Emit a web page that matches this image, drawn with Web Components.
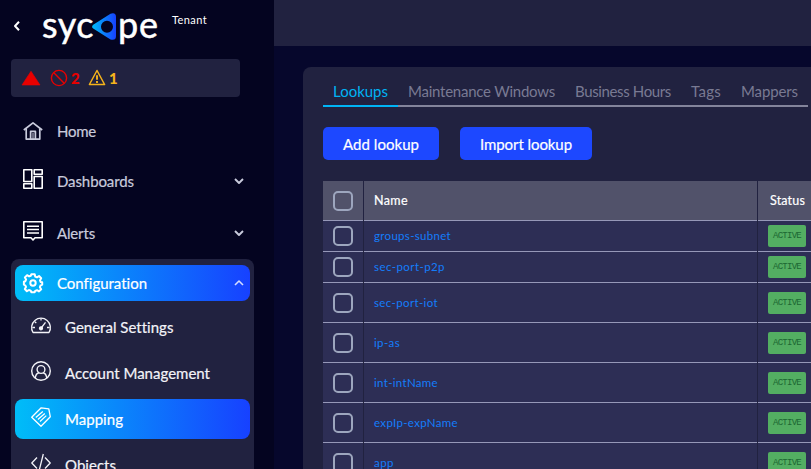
<!DOCTYPE html>
<html lang="en">
<head>
<meta charset="utf-8">
<title>Sycope</title>
<style>
html,body{margin:0;height:100%;overflow:hidden;background:#040420;font-family:Lato,"Liberation Sans",sans-serif}
</style>
</head>
<body>
<app-shell></app-shell>
<script>
function define(name, html, ready) {
  const t = document.createElement('template');
  t.innerHTML = html;
  customElements.define(name, class extends HTMLElement {
    constructor() {
      super();
      this.attachShadow({ mode: 'open' });
    }
    connectedCallback() {
      if (this.shadowRoot.childNodes.length) return;
      this.shadowRoot.append(document.importNode(t.content, true));
      if (ready) ready(this, this.shadowRoot);
    }
  });
}

/* Text tracked to a given width. */
define('fit-text', `<style>:host{display:inline-block;white-space:nowrap;flex:none}span{display:inline-block}</style><span><slot></slot></span>`,
  (el, root) => {
    const s = root.querySelector('span'), w = parseFloat(el.getAttribute('w'));
    const natural = s.getBoundingClientRect().width;
    s.style.letterSpacing = ((w - natural) / el.textContent.length) + 'px';
    el.style.width = w + 'px';
  });

const ICONS = {
  home: '<g stroke-width="1.7"><path d="M.8 9 10 1.8 19.200 9"/><path d="M3.200 7.600V18.100H16.800V7.600"/><path d="M7.600 18V10.400H12.400V18"/><path d="M10 12v6" stroke-width="1"/></g>',
  dash: '<g stroke-width="1.600"><path d="M.8.8H8.800V12.500H.8ZM11.200.8H19.200V5.200H11.200ZM11.200 7.500H19.200V19.200H11.200ZM.8 14.800H8.800V19.200H.8Z"/></g>',
  alerts: '<g stroke-width="1.600"><path d="M.8.8H19.200V16.800H12L10 19 8 16.800H.8Z"/><path d="M4 5.200H16M4 8.600H16M4 12H16" stroke-width="1.500"/></g>',
  gear: '<g stroke-width="2"><path d="M8.3 1.2h3.400l.5 2.300 1.800.8 2-1.300 2.200 2.300-1.200 2 .7 1.700 1.500.3v2.400l-1.700.8-.6 1.700 1.300 2-2.200 2.200-2-1.200-1.800.7-.5 1.300H8.300l-.6-1.600-1.800-.6-2 1.200-2.100-2.200L3 14l-.7-1.700-1.400-.6V8.800l1.500-.6.7-1.800-1.200-2 2.200-2.200 2 1.200 1.700-.6Z"/><circle cx="10" cy="10" r="2.700"/></g>',
  gauge: '<g stroke-width="1.300"><path d="M2 17.500A9.400 9.400 0 1 1 18 17.500Z"/><path d="M10 3.500v2M3.800 6.700l1.500 1.200M1.400 12.500h2.600M16 12.500h2.600M10.200 13 14.500 7.300"/><circle cx="10" cy="13.300" r="1.500" fill="currentColor"/></g>',
  user: '<g stroke-width="1.400"><circle cx="10" cy="10" r="9.300"/><circle cx="10" cy="8.500" r="3.900"/><path d="M4.200 17.200C4.600 13.800 6.300 12 8 11.700M15.800 17.200C15.400 13.800 13.700 12 12 11.700"/></g>',
  tag: '<g stroke-width="1.300"><path d="M.7 10.200 10.200.8 17.800 1.900 19.300 9.800 10 19.300Z"/><path d="M4.800 10.600 11.800 4.600M6.900 12.500 13.800 6.400M9 14.500 15.300 8.600"/></g>',
  code: '<g stroke-width="1.300"><path d="M6 4.500.8 10 6 15.500M14 4.500 19.200 10 14 15.500M12.300 1 7.800 19"/></g>',
  down: '<path d="M6 8 10 12 14 8" stroke-width="1.900"/>',
  up: '<path d="M6 12 10 8 14 12" stroke-width="1.600" stroke="#d5dcff"/>',
  back: '<path d="M12 5.700 8 10 12 14.300" stroke-width="2"/>',
  solid: '<path d="M10 3.200 19 17H1Z" fill="currentColor" stroke="currentColor" stroke-width=".6"/>',
  ban: '<g stroke-width="1.400"><circle cx="10" cy="10" r="7.600"/><path d="M4.600 4.600 15.400 15.400"/></g>',
  warn: '<path d="M10 2.500 17.600 16.500H2.400Z" stroke-width="1.500"/><path d="M10 7.200v4.600M10 13v2" stroke-width="1.900"/>'
};
define('ui-icon', `<style>:host{display:block;width:20px;height:20px;flex:none}svg{display:block;overflow:visible}</style>
<svg width="20" height="20" viewBox="0 0 20 20" fill="none" stroke="currentColor" stroke-linejoin="round"></svg>`,
  (el, root) => root.querySelector('svg').innerHTML = ICONS[el.getAttribute('name')]);

define('brand-logo', `<style>
:host{display:flex;align-items:flex-start;height:48px;color:#fff;font-size:36px;line-height:48px;-webkit-text-stroke:.5px #fff}
svg{display:block;margin:13px 1px 0 -2px;flex:none}
</style>
<fit-text w="52">syc</fit-text>
<svg width="25" height="28" viewBox="0 0 25 28"><defs><linearGradient id="g"><stop offset="0" stop-color="#00bdf8"/><stop offset="1" stop-color="#1741ff"/></linearGradient></defs>
<path fill="url(#g)" fill-rule="evenodd" d="M1.200 11.800 18.500.7Q24 -1 24 4V23Q24 28 18.500 26.500L1.200 15.600Q-1 13.700 1.200 11.800ZM15 7.800a6 6 0 1 0 0 12a6 6 0 1 0 0-12Z"/></svg>
<fit-text w="41">pe</fit-text>`);

define('alert-summary', `<style>
:host{display:flex;align-items:center;box-sizing:border-box;width:229px;height:38px;margin-left:11px;padding-left:10px;background:#212240;border-radius:4px;font:700 15px Lato,sans-serif;color:#e80000}
ui-icon+ui-icon{margin-left:8px}b{margin-left:2px;width:8px}.y{color:#f5b31b}.w{margin-left:8px}
</style><ui-icon name="solid"></ui-icon><ui-icon name="ban"></ui-icon><b>2</b><ui-icon name="warn" class="y w"></ui-icon><b class="y">1</b>`);

define('nav-item', `<style>
:host{display:flex;align-items:center;box-sizing:border-box;height:50px;padding:0 5px 0 23px;color:#c9cbdc;font-size:15px;line-height:20px;-webkit-text-stroke:.2px currentColor}
:host([bright]) ui-icon:first-of-type{color:#fff}
:host([lift]) ui-icon:first-of-type{margin-bottom:4px}
fit-text{margin-left:14px}.arrow{margin-left:auto}
:host([group]){height:36px;padding:0 1px 0 8px;background:linear-gradient(90deg,#00bdf8,#1741ff);border-radius:8px;color:#fff}
:host([sub]){height:40px;padding:0 0 0 16px;color:#f3f3f8;border-radius:8px}
:host([active]){background:linear-gradient(90deg,#00bdf8,#1741ff);color:#fff}
</style>`, (el, root) => {
    const a = n => el.getAttribute(n);
    root.innerHTML += `<ui-icon name="${a('icon')}"></ui-icon><fit-text w="${a('w')}">${a('label')}</fit-text>` +
      (a('arrow') ? `<ui-icon class="arrow" name="${a('arrow')}"></ui-icon>` : '');
  });

define('side-bar', `<style>
:host{display:block;width:274px;height:469px;overflow:hidden;background:#040420;flex:none}
header{display:flex;height:59px;padding-left:7px;box-sizing:border-box;color:#fff}
header>ui-icon{margin-top:16px}brand-logo{margin-left:15px}
.tenant{font-size:11px;line-height:16px;margin:12px 0 0 13px}
nav{display:flex;flex-direction:column;padding-top:9px;width:254px}
.gap{margin-top:2px}
section{display:flex;flex-direction:column;gap:6px;width:235px;margin:1px 0 0 11px;padding:6px 4px;background:#212240;border-radius:8px}
</style>
<header><ui-icon name="back"></ui-icon><brand-logo></brand-logo><fit-text class="tenant" w="35">Tenant</fit-text></header>
<alert-summary></alert-summary>
<nav>
<nav-item icon="home" label="Home" w="39"></nav-item>
<nav-item bright lift icon="dash" label="Dashboards" w="77" arrow="down"></nav-item>
<nav-item bright lift class="gap" icon="alerts" label="Alerts" w="38" arrow="down"></nav-item>
</nav>
<section>
<nav-item group icon="gear" label="Configuration" w="90" arrow="up"></nav-item>
<nav-item sub lift icon="gauge" label="General Settings" w="108"></nav-item>
<nav-item sub lift icon="user" label="Account Management" w="145"></nav-item>
<nav-item sub lift active icon="tag" label="Mapping" w="58"></nav-item>
<nav-item sub lift icon="code" label="Objects" w="51"></nav-item>
</section>`);

define('tab-item', `<style>
:host{display:block;height:37px;box-sizing:border-box;padding:11px 10px 0;border-bottom:2px solid #83849b;color:#797a93;font-size:15px;line-height:20px}
:host([active]){color:#00b4f5;border-color:#00b4f5}
</style><slot></slot>`);

define('ui-button', `<style>
:host{display:flex;align-items:center;justify-content:center;box-sizing:border-box;height:33px;padding-top:1px;background:#1d48ff;color:#fff;border-radius:5px;font-size:15px;line-height:20px;-webkit-text-stroke:.2px #fff}
</style><slot></slot>`);

define('check-box', `<style>:host{display:block;box-sizing:border-box;width:20px;height:20px;border:2px solid #9da6be;border-radius:5px}</style>`);
define('status-badge', `<style>:host{display:flex;align-items:center;justify-content:center;width:38px;height:22px;background:#53ae62;color:#1c6733;border-radius:2px;font:9px/12px "Liberation Mono",monospace}</style><fit-text w="28">ACTIVE</fit-text>`);

define('lookup-row', `<style>
:host{display:grid;grid-template-columns:40px 393px 1fr;column-gap:1px;height:var(--h,40px)}
div{display:flex;align-items:center;box-sizing:border-box;padding-left:10px;background:#2d2e55;border-bottom:1px solid #9698b8;color:#147dfa;font-size:11.500px;line-height:16px}
:host([head]) div{background:#51526a;color:#fff;font-size:12.500px;-webkit-text-stroke:.2px #fff}
:host([head]) div:last-child{padding-left:12px}
</style>`, (el, root) => {
    const head = el.hasAttribute('head');
    if (el.getAttribute('h')) el.style.setProperty('--h', el.getAttribute('h') + 'px');
    root.innerHTML += `<div><check-box></check-box></div><div><fit-text w="${el.getAttribute('w')}">${el.getAttribute('label')}</fit-text></div><div>` +
      (head ? '<fit-text w="35">Status</fit-text>' : '<status-badge></status-badge>') + '</div>';
  });

define('lookup-panel', `<style>
:host{display:block;box-sizing:border-box;margin:21px 0 0 29px;width:540px;height:450px;padding:3px 0 0 20px;background:#212240;border-radius:8px 0 0}
.tabs{display:flex;height:37px}
.buttons{display:flex;gap:21px;margin:20px 0 21px}
.a{width:116px}.b{width:132px}
</style>
<div class="tabs">
<tab-item active><fit-text w="55">Lookups</fit-text></tab-item>
<tab-item><fit-text w="147">Maintenance Windows</fit-text></tab-item>
<tab-item><fit-text w="96">Business Hours</fit-text></tab-item>
<tab-item><fit-text w="30">Tags</fit-text></tab-item>
<tab-item><fit-text w="57">Mappers</fit-text></tab-item>
</div>
<div class="buttons"><ui-button class="a"><fit-text w="76">Add lookup</fit-text></ui-button><ui-button class="b"><fit-text w="92">Import lookup</fit-text></ui-button></div>
<lookup-row head label="Name" w="34"></lookup-row>
<lookup-row h="31" label="groups-subnet" w="77"></lookup-row>
<lookup-row h="31" label="sec-port-p2p" w="71"></lookup-row>
<lookup-row label="sec-port-iot" w="64"></lookup-row>
<lookup-row label="ip-as" w="26"></lookup-row>
<lookup-row label="int-intName" w="64"></lookup-row>
<lookup-row label="expIp-expName" w="84"></lookup-row>
<lookup-row label="app" w="20"></lookup-row>`);

define('app-shell', `<style>
:host{display:flex;width:811px;height:469px;overflow:hidden}
main{flex:1;min-width:0;background:#06072c}
.top{height:46px;background:#212240}
</style><side-bar></side-bar><main><div class="top"></div><lookup-panel></lookup-panel></main>`);
</script>
</body>
</html>
